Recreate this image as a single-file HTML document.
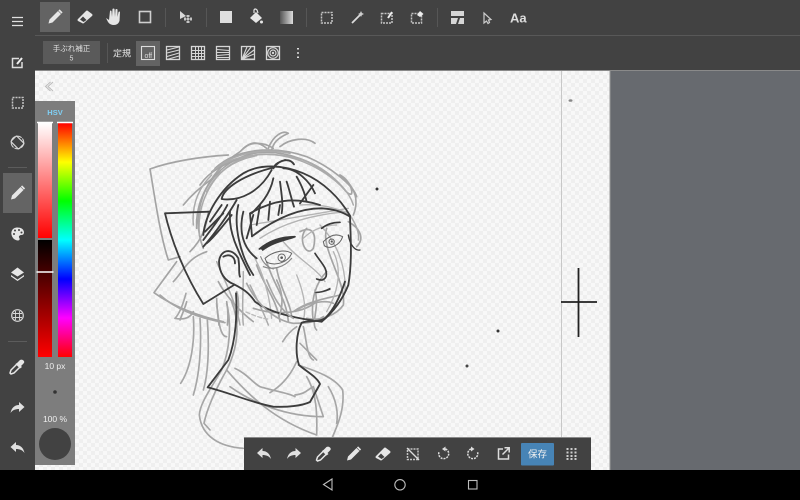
<!DOCTYPE html>
<html lang="ja"><head><meta charset="utf-8"><style>
html,body{margin:0;padding:0;width:800px;height:500px;overflow:hidden;background:#000}
svg{display:block;position:absolute;left:0;top:0}
text{font-family:"Liberation Sans","Noto Sans CJK JP",sans-serif}
#bg{position:absolute;left:35px;top:71px;width:575px;height:399px;background-color:#f8f8f8;background-image:conic-gradient(#efefef 25%,transparent 0 50%,#efefef 0 75%,transparent 0);background-size:8px 8px}
</style></head><body>
<div id="bg"></div>
<svg width="800" height="500" viewBox="0 0 800 500">
<defs>
<linearGradient id="g1" x1="0" y1="0" x2="0" y2="1"><stop offset="0" stop-color="#fff"/><stop offset="1" stop-color="#f00"/></linearGradient>
<linearGradient id="g2" x1="0" y1="0" x2="0" y2="1"><stop offset="0" stop-color="#000"/><stop offset="1" stop-color="#f00"/></linearGradient>
<linearGradient id="g3" x1="0" y1="0" x2="0" y2="1"><stop offset="0" stop-color="#f00"/><stop offset=".167" stop-color="#ff0"/><stop offset=".333" stop-color="#0f0"/><stop offset=".5" stop-color="#0ff"/><stop offset=".667" stop-color="#00f"/><stop offset=".833" stop-color="#f0f"/><stop offset="1" stop-color="#f00"/></linearGradient>
<linearGradient id="g4"><stop offset="0" stop-color="#555"/><stop offset="1" stop-color="#ddd"/></linearGradient>
<g id="pen"><path d="M-6.5,6.500 L-5.500,2.500 L3,-6 L6,-3 L-2.500,5.500 Z" fill="#e6e6e6"/><path d="M3.800,-6.800 L5,-8 L8,-5 L6.800,-3.800Z" fill="#e6e6e6" transform="translate(-.4 .4)"/></g>
<g id="era"><path d="M-7,2 L1,-6 Q2,-7 3,-6 L7,-3 Q8,-2 7,-1 L-1,6 Q-2,7 -3,6 L-7,4 Q-8,3 -7,2Z" fill="#e6e6e6"/><path d="M-5,2.500 L-2,-.5 L1.500,3 L-1.500,5 Z" fill="#424242"/></g>
<g id="und"><path d="M-7,-1 L-1.500,-6 L-1.500,-3 C3,-3 6,0 7,5 C5,2 2,1 -1.500,1 L-1.500,4 Z" fill="#e0e0e0"/></g>
<g id="red"><path d="M7,-1 L1.500,-6 L1.500,-3 C-3,-3 -6,0 -7,5 C-5,2 -2,1 1.500,1 L1.500,4 Z" fill="#e0e0e0"/></g>
<g id="dro"><path d="M-6,7 L-7,6 L-6,3 L0,-3 L3,0 L-3,6Z" fill="none" stroke="#e6e6e6" stroke-width="1.500"/><path d="M0,-4 L3,-7 Q5,-8 6.500,-6.500 Q8,-5 6.500,-3.500 L4,-1 L5,0 L3,1.500 L-1.500,-3 L0,-4Z" fill="#e6e6e6"/></g>
<g id="gs1">
<path d="M265,90 C180,95 90,110 30,132 C45,220 60,330 85,405 L120,395"/>
<path d="M110,410 L42,503 C100,545 180,575 250,590"/>
<path d="M170,310 C165,210 230,110 340,85 C430,70 540,110 610,190 C650,240 640,170 600,150"/>
<path d="M225,130 C290,70 400,60 500,95 C570,125 640,180 650,215"/>
<path d="M190,370 C150,270 190,150 300,80 C330,50 350,45 380,70"/>
<path d="M385,70 C400,30 430,15 445,25 C410,40 400,55 395,75 M420,65 C450,40 500,35 525,55 M400,70 C370,50 330,50 310,70"/>
<path d="M625,290 C660,310 675,340 650,365 M600,150 C640,180 660,220 640,270"/>
<path d="M130,240 C170,190 210,170 240,140 M180,180 C210,135 260,115 300,100"/>
<path d="M150,380 C190,340 200,300 205,260 M100,470 C130,440 140,400 200,380"/>
<path d="M480,320 C520,300 530,330 520,370 C500,400 470,340 500,310"/>
<path d="M560,310 C540,370 620,470 610,540 C590,570 540,590 500,580"/>
<path d="M350,420 C370,480 410,520 420,590 M380,410 C400,480 440,520 445,590 M410,430 C420,490 450,530 455,575"/>
<path d="M340,550 C400,570 480,570 530,530 M460,560 C500,530 560,520 600,510 M520,590 C510,520 530,470 560,440"/>
<path d="M235,470 C255,510 300,560 340,590 M290,500 C300,530 295,570 290,600 M260,530 C265,560 265,580 262,600 M230,520 C230,550 235,580 237,600 M160,560 C150,580 130,585 105,580 M140,530 C135,550 125,570 120,585"/>
</g>
<g id="gs2">
<path d="M100,110 C105,180 95,260 62,310 M120,115 C125,190 120,280 100,345 M142,120 C148,200 145,280 130,330"/>
<path d="M0,45 C50,90 120,115 195,128 M78,40 C70,70 60,100 45,115 M170,70 C175,120 180,170 200,170"/>
<path d="M200,70 C215,130 210,210 185,270 C150,330 120,370 118,405 C125,470 180,500 250,505"/>
<path d="M215,65 C240,130 235,200 200,270 C165,330 140,390 132,430 L150,450"/>
<path d="M225,265 C260,280 280,310 300,320 C330,330 390,340 405,350"/>
<path d="M200,270 C260,340 340,420 470,465 C472,400 470,340 440,290"/>
<path d="M210,320 C280,370 380,410 490,410 L460,320 C440,330 440,340 405,345"/>
<path d="M415,255 C440,265 520,285 548,330 C555,390 530,440 518,470 M505,320 C530,360 535,400 530,430"/>
<path d="M330,338 C360,320 390,290 410,245 M368,185 C380,165 395,150 410,140"/>
<path d="M260,10 C290,70 340,120 400,130 C430,130 460,130 490,110 M320,0 C340,50 360,90 400,115 M350,0 C370,40 370,80 355,115"/>
<path d="M465,30 C480,90 450,130 470,150 M430,140 C440,180 440,230 460,240 M420,190 L470,240 M410,90 C450,65 500,60 520,70"/>
</g>
</defs>

<!-- canvas extras -->
<rect x="610" y="71" width="190" height="399" fill="#676a6f"/>
<rect x="609.500" y="71" width="1" height="399" fill="#999"/>
<rect x="561" y="71" width="1" height="399" fill="#c8c8c8"/>
<path d="M578.500,268V337M561,302H597" stroke="#222" stroke-width="1.800" fill="none"/>
<ellipse cx="570.500" cy="100.500" rx="2" ry="1.300" fill="#888"/>
<circle cx="377" cy="189" r="1.500" fill="#333"/><circle cx="498" cy="331" r="1.500" fill="#333"/><circle cx="467" cy="366" r="1.500" fill="#444"/>
<path d="M53,82 L48,86.500 L53,91 M50.500,82 L45.500,86.500 L50.500,91" stroke="#bbb" stroke-width="1" fill="none"/>

<!-- sketch upper, zoom-6 coords -->
<g transform="translate(140 125) scale(.33333)" fill="none" stroke-linecap="round" stroke-linejoin="round">
<g stroke="#a4a4a4" stroke-width="5">
<use href="#gs1"/>
</g>
<g stroke="#ababab" stroke-width="4.500">
<path d="M215,140 C280,85 390,75 490,105 C560,130 625,190 640,240"/>
<path d="M178,330 C170,230 220,130 320,95 C420,70 530,115 600,180"/>
<path d="M240,120 C300,80 380,70 450,85 M200,200 C230,140 280,105 350,92"/>
<path d="M160,300 C155,240 175,190 215,150 M620,260 C640,280 660,320 655,345"/>
<path d="M230,410 C260,480 290,540 300,600 M310,440 C310,500 305,560 310,600 M330,480 C350,520 370,560 385,600"/>
</g>
<g stroke="#b4b4b4" stroke-width="4">
<path d="M360,340 C420,300 500,270 620,260 M480,240 C540,235 590,250 625,265 M330,300 L625,250"/>
<path d="M490,340 C520,310 560,300 590,300 M430,350 C470,400 530,430 555,470 M580,380 C610,440 590,510 560,560"/>
<path d="M345,400 C380,470 390,530 395,580 M470,450 C490,500 500,550 490,585 M540,300 C570,330 620,400 615,500"/>
</g>
<g stroke="#3c3c3c" stroke-width="5.500">
<path d="M207,260 L75,265 C95,350 135,450 190,537 L282,480"/>
<path d="M336,334 L330,265 C400,225 460,215 540,240"/>
<path d="M336,334 C400,285 470,250 545,250 C580,252 610,262 630,275"/>
<path d="M190,330 C195,270 240,190 310,145 C360,115 430,120 490,145 C550,170 600,220 630,272"/>
<path d="M245,222 C300,230 360,200 395,135 M245,222 C250,190 310,150 400,128"/>
<path d="M400,130 C420,100 450,100 462,118 M400,130 C405,115 420,110 435,105"/>
<path d="M430,130 C470,130 510,170 525,205 M420,170 C425,210 430,240 425,265 M440,170 C450,200 455,225 462,245 M470,155 C490,190 495,210 500,230 M520,180 L480,235 M400,160 C390,210 360,240 335,265"/>
<path d="M190,365 C230,320 270,260 290,225 M190,345 C215,310 245,275 262,240 M200,355 C225,335 250,300 275,270 M195,320 L250,265 M210,290 L245,240"/>
<path d="M295,240 C280,300 300,390 340,450 M270,260 C265,320 290,370 330,450 M310,260 C295,320 310,370 350,400 M340,270 L320,340 M360,240 L350,300 M390,230 L385,285 M420,240 L415,270"/>
<path d="M630,275 C632,340 637,410 625,480 C605,530 575,565 545,590"/>
<path d="M282,478 C250,465 238,440 237,410 C240,375 275,365 295,400 C300,430 295,445 300,455 M250,395 C270,385 285,395 285,415"/>
<path d="M282,478 C305,490 325,500 345,530 C385,560 450,578 545,590"/>
</g>
<g stroke="#3a3a3a">
<path d="M358,372 C390,345 430,335 465,335 C440,345 400,350 368,375" stroke-width="5" fill="#3a3a3a"/>
<path d="M545,310 C560,298 580,292 600,292" stroke-width="5"/>
<path d="M375,400 C400,378 435,372 455,385 C445,410 410,425 380,412 Z" stroke-width="3" stroke="#666"/>
<circle cx="425" cy="398" r="11" stroke="#666" stroke-width="3"/><circle cx="425" cy="398" r="4" fill="#555" stroke="none"/>
<path d="M370,425 C395,435 430,430 455,400 M362,395 C370,415 385,428 400,432" stroke="#888" stroke-width="3.500"/>
<path d="M550,350 C570,330 590,325 608,335 C600,360 570,375 553,362Z" stroke="#666" stroke-width="3"/>
<circle cx="575" cy="350" r="8" stroke="#666" stroke-width="3"/><circle cx="575" cy="350" r="3" fill="#555" stroke="none"/>
<path d="M525,385 C540,410 565,430 558,455 C550,470 540,465 530,462" stroke-width="5"/>
<path d="M525,502 C540,502 555,498 570,490" stroke-width="3.500"/>
<path d="M625,330 C630,360 645,378 660,375" stroke-width="4"/>
</g>
</g>
<!-- sketch lower, zoom-7 coords -->
<g transform="translate(160 280) scale(.33333)" fill="none" stroke-linecap="round" stroke-linejoin="round">
<g stroke="#a6a6a6" stroke-width="5">
<use href="#gs2"/>
</g>
<g stroke="#bbb" stroke-width="4"><path d="M258,96 C280,105 300,115 330,118" stroke-dasharray="12 7"/></g>
<g stroke="#3c3c3c" stroke-width="5.500">
<path d="M228,40 C232,100 228,180 205,240 L143,322 C200,335 280,370 340,380 C380,382 425,378 450,366 L480,312 C470,290 440,275 417,255 C405,220 408,160 425,128 C445,120 480,128 497,113 C520,90 540,50 555,5"/>
<path d="M467,38 C480,38 495,34 510,28" stroke-width="3.500"/>
</g>
</g>

<!-- left bar -->
<rect x="0" y="0" width="35" height="470" fill="#424242"/>
<!-- top toolbar -->
<rect x="35" y="0" width="765" height="71" fill="#424242"/>
<rect x="35" y="35" width="765" height="1" fill="#585858"/>
<rect x="35" y="70" width="765" height="1" fill="#8a8a8a"/>
<rect x="40" y="2" width="30" height="30" fill="#636363"/>
<use href="#pen" x="55" y="17"/>
<use href="#era" x="85" y="17"/>
<path d="M106,18 L109,20 L110,11 Q110.500,10 111.500,11 L112,17 L112.500,9 Q113.500,8 114.500,9 L115,17 L115.500,9.500 Q116.500,8.500 117.500,9.500 L117.500,17 L118.500,12 Q119.500,11 120,12 L119.500,21 Q118,25 114,25 Q110,25 108,22Z" fill="#e6e6e6"/>
<rect x="139.500" y="11.500" width="11" height="11" fill="none" stroke="#cfcfcf" stroke-width="1.600"/>
<path d="M165.500,8V27M206.500,8V27M306.500,8V27M437.500,8V27" stroke="#565656"/>
<path d="M180,11 L180,19 L186,16 Z" fill="#d8d8d8"/><path d="M188,15 L188,23 M184,19 L192,19" stroke="#c4c4c4" stroke-width="3" stroke-dasharray="2 1"/>
<rect x="220" y="11" width="12" height="12" fill="#dedede"/>
<path d="M250,18 L256,12 L262,18 L256,23Z" fill="#e6e6e6"/><path d="M254,13 L254,10 Q255,8 257,10 L258,13" stroke="#e6e6e6" fill="none" stroke-width="1.200"/><circle cx="261.500" cy="22" r="1.500" fill="#e6e6e6"/>
<rect x="280" y="11" width="13" height="13" fill="url(#g4)"/>
<rect x="321.500" y="12.500" width="10.500" height="10.500" fill="none" stroke="#c4c4c4" stroke-width="1.500" stroke-dasharray="2 1"/>
<path d="M352,23 L360,15" stroke="#ddd" stroke-width="1.800"/><path d="M361,11 L362,13 L364,14 L362,15 L361,17 L360,15 L358,14 L360,13Z" fill="#ccc"/>
<rect x="381.500" y="13.500" width="10.500" height="9.500" fill="none" stroke="#c4c4c4" stroke-width="1.500" stroke-dasharray="2 1"/>
<path d="M388,18 L392,12" stroke="#eee" stroke-width="2"/>
<rect x="411.500" y="13.500" width="10" height="9.500" fill="none" stroke="#c4c4c4" stroke-width="1.500" stroke-dasharray="2 1"/>
<path d="M417,15 L420,11 L423.500,14 L420,17 Z" fill="#eee"/>
<rect x="451" y="11" width="13" height="13" fill="#d6d6d6"/><rect x="451" y="16" width="13" height="2" fill="#424242"/><path d="M456,24 L458,18 H460 L458,24Z" fill="#424242"/>
<path d="M484,13 L484,23 L486.500,21 L488,23.500 L489.500,22.500 L488.500,20 L491,19.500Z" fill="none" stroke="#ccc" stroke-width="1.200"/>
<text x="510" y="22.500" font-size="13" font-weight="700" fill="#ddd">Aa</text>

<!-- second row -->
<rect x="43" y="41" width="57" height="23" fill="#5a5a5a"/>
<text x="71.500" y="51" font-size="7.500" fill="#ddd" text-anchor="middle">手ぶれ補正</text>
<text x="71.500" y="60.500" font-size="7" fill="#ddd" text-anchor="middle">5</text>
<path d="M107.500,43V63" stroke="#565656"/>
<text x="113" y="56.500" font-size="9" fill="#e6e6e6">定規</text>
<rect x="136" y="41" width="24" height="25" fill="#636363"/>
<rect x="141.500" y="46.500" width="13" height="13" fill="none" stroke="#ddd" stroke-width="1.100"/>
<text x="148.300" y="58" font-size="7" fill="#ddd" text-anchor="middle">off</text>
<g fill="none" stroke="#d6d6d6">
<rect x="166.500" y="46.500" width="13" height="13" stroke-width="1.300"/>
<path d="M167,50 L179,47 M167,53 L179,50 M167,56.500 L179,53 M167,59.500 L179,56" stroke-width="1.100"/>
<rect x="191.500" y="46.500" width="13" height="13" stroke-width="1.300"/>
<path d="M191.500,50.500H204.500M191.500,53.500H204.500M191.500,56.500H204.500M195.500,46.500V59.500M198.500,46.500V59.500M201.500,46.500V59.500" stroke-width="1"/>
<rect x="216.500" y="46.500" width="13" height="13" stroke-width="1.300"/>
<path d="M217,49.500 L229,50.500 M217,52.500 L229,52.500 M217,55.500 L229,54.500 M217,57.500 L229,57.500" stroke-width="1.100"/>
<rect x="241.500" y="46.500" width="13" height="13" stroke-width="1.300"/>
<path d="M242,59 L247,47 M242,59 L251,47 M242,59 L254,50 M242,59 L254,54 M242,59 L254,59" stroke-width="1.100"/>
<rect x="266.500" y="46.500" width="13" height="13" stroke-width="1.300"/>
<circle cx="273" cy="53" r="5.300" stroke-width="1.200"/><circle cx="273" cy="53" r="3" stroke-width="1.200"/><circle cx="273" cy="53" r="1.200" fill="#d6d6d6" stroke="none"/>
</g>
<path d="M298,48V49.500M298,52.200V53.700M298,56.500V58" stroke="#ddd" stroke-width="2"/>

<!-- left icons -->
<path d="M12,18.500H23M12,22.500H23M12,26.500H23" stroke="#e0e0e0" stroke-width="1.300" transform="translate(0 -1)"/>
<path d="M19,58.500H12.500V67.500H22V62" fill="none" stroke="#ddd" stroke-width="1.500"/><path d="M17,64 L22,58" stroke="#eee" stroke-width="2"/>
<rect x="12.500" y="97.500" width="10.500" height="10.500" fill="none" stroke="#c4c4c4" stroke-width="1.500" stroke-dasharray="2 1"/>
<circle cx="17.500" cy="142.500" r="6.300" fill="none" stroke="#d0d0d0" stroke-width="1.100" stroke-dasharray="6 1"/>
<rect x="13.500" y="137" width="8" height="11" rx="1" fill="none" stroke="#d8d8d8" stroke-width="1.200" transform="rotate(-45 17.500 142.500)"/>
<path d="M8,167.500H27M8,341.500H27" stroke="#5c5c5c"/>
<rect x="3" y="173" width="29" height="40" fill="#646464"/>
<use href="#pen" x="17.500" y="193"/>
<path d="M17.500,227.500 C12,227.500 11,232 11.500,234.500 C12,238 15,240.500 18,240.500 C20,240.500 20,238.500 19,237.500 C18.500,236 20,235 21.500,235 C23.500,235 24,233.500 24,232 C23.500,229 21,227.500 17.500,227.500Z" fill="#e6e6e6"/>
<g fill="#424242"><circle cx="14" cy="234" r="1"/><circle cx="15" cy="230.500" r="1"/><circle cx="19" cy="230" r="1"/><circle cx="21.500" cy="232.500" r="1"/></g>
<path d="M17.500,267.500 L24,272.500 L17.500,276.500 L11,272.500Z" fill="#e6e6e6"/><path d="M11,275 L17.500,279.500 L24,275 L24,276.500 L17.500,281 L11,276.500Z" fill="#e6e6e6"/>
<circle cx="17.500" cy="315.500" r="5.800" fill="none" stroke="#d6d6d6" stroke-width="1.200"/>
<path d="M13,313.500H22M13,317.500H22M15.500,311V320M19.500,311V320" stroke="#d6d6d6" stroke-width=".9"/>
<use href="#dro" x="17" y="367"/>
<use href="#red" x="17.500" y="408"/>
<use href="#und" x="17.500" y="448"/>

<!-- colour panel -->
<rect x="35" y="101" width="40" height="364" fill="#7d7d7d"/>
<text x="55" y="115" font-size="7.500" font-weight="700" fill="#7fd0f5" text-anchor="middle">HSV</text>
<rect x="38" y="123" width="14" height="115" fill="url(#g1)"/>
<rect x="38" y="240" width="14" height="117" fill="url(#g2)"/>
<rect x="58" y="123" width="14" height="234" fill="url(#g3)"/>
<path d="M37,122.500H53M57,122.500H73M36.500,272H53.500" stroke="#fff" stroke-width="1.600"/>
<text x="55" y="369" font-size="8.500" fill="#eee" text-anchor="middle">10 px</text>
<circle cx="55" cy="392" r="1.800" fill="#333"/>
<text x="55" y="422" font-size="8.500" fill="#eee" text-anchor="middle">100 %</text>
<circle cx="55" cy="444" r="16" fill="#424242"/>

<!-- bottom bar -->
<rect x="244" y="437" width="347" height="33" fill="#424242"/>
<path d="M244,437.500H591" stroke="#8a8a8a"/>
<use href="#und" x="264" y="454"/>
<use href="#red" x="294" y="454"/>
<use href="#dro" x="323.500" y="454"/>
<use href="#pen" x="353.500" y="454"/>
<use href="#era" x="383" y="454"/>
<rect x="407.500" y="449" width="10.500" height="10.500" fill="none" stroke="#c4c4c4" stroke-width="1.500" stroke-dasharray="2 1"/>
<path d="M407,448 L419,460" stroke="#ddd" stroke-width="1.300"/>
<g fill="none" stroke="#ddd" stroke-width="1.500">
<path d="M445.500,449 A5,5 0 1 1 439,452" stroke-dasharray="2 1"/><path d="M445.500,446.500 L442,449 L445.500,451.500" fill="#ddd" stroke="none"/>
<path d="M471,449 A5,5 0 1 0 477.500,452" stroke-dasharray="2 1"/><path d="M471,446.500 L474.500,449 L471,451.500" fill="#ddd" stroke="none"/>
<path d="M503,449H498.500V459H508.500V454.500"/><path d="M502.500,454.500 L509,448 M504.500,447.800H509.200V452.500"/>
</g>
<rect x="521" y="443" width="33" height="22.500" rx="1" fill="#4784b6"/>
<text x="537.500" y="457.500" font-size="9.500" fill="#f0f0f0" text-anchor="middle">保存</text>
<g fill="#ccc"><rect x="566.500" y="448" width="2" height="2"/><rect x="570.500" y="448" width="2" height="2"/><rect x="574.500" y="448" width="2" height="2"/><rect x="566.500" y="451.500" width="2" height="2"/><rect x="570.500" y="451.500" width="2" height="2"/><rect x="574.500" y="451.500" width="2" height="2"/><rect x="566.500" y="455" width="2" height="2"/><rect x="570.500" y="455" width="2" height="2"/><rect x="574.500" y="455" width="2" height="2"/><rect x="566.500" y="458" width="2" height="2"/><rect x="570.500" y="458" width="2" height="2"/><rect x="574.500" y="458" width="2" height="2"/></g>

<!-- nav bar -->
<rect x="0" y="470" width="800" height="30" fill="#000"/>
<path d="M332,479 L323.500,484.500 L332,490Z" fill="none" stroke="#bdbdbd" stroke-width="1.100"/>
<circle cx="400" cy="484.800" r="5.200" fill="none" stroke="#bdbdbd" stroke-width="1.100"/>
<rect x="468.500" y="480.500" width="8.500" height="8.500" fill="none" stroke="#bdbdbd" stroke-width="1.100"/>
</svg>
</body></html>
